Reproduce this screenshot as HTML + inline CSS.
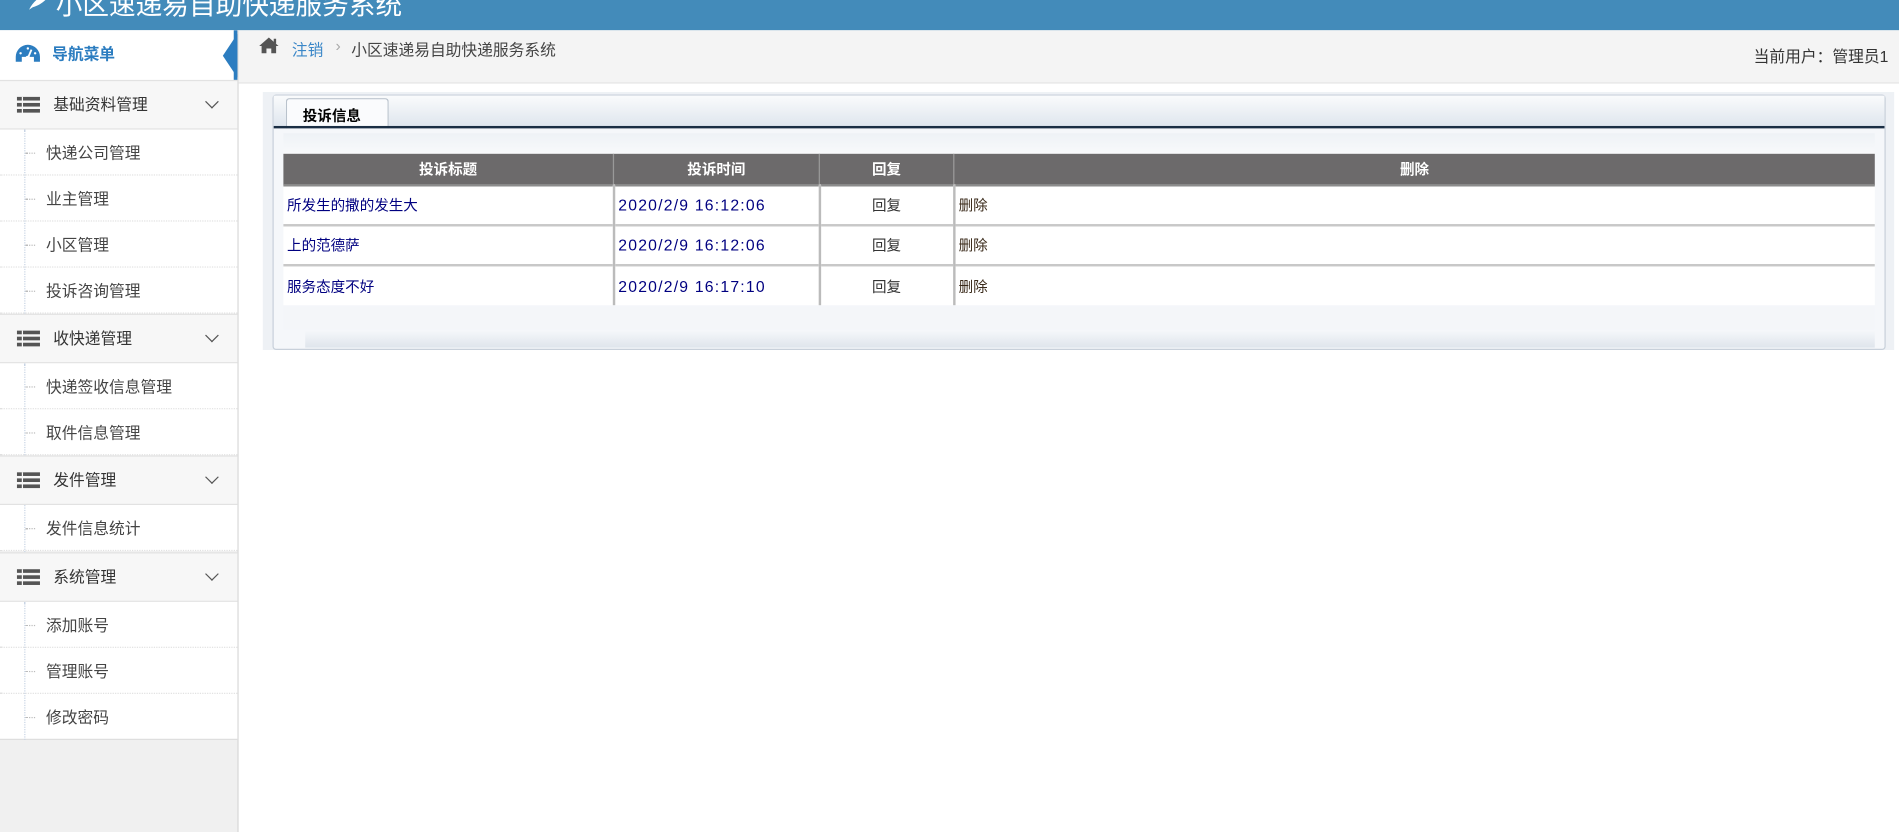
<!DOCTYPE html>
<html><head><meta charset="utf-8"><style>
html,body{margin:0;padding:0;width:1899px;height:831px;overflow:hidden;background:#fff}
#w{position:absolute;left:0;top:0;width:1568px;height:687px;transform:scale(1.21110);transform-origin:0 0;font-family:"Liberation Sans","Noto Sans CJK SC",sans-serif;font-size:13px;color:#333}
.a{position:absolute}
#hd{left:0;top:0;width:1568px;height:25px;background:#438bba;overflow:hidden}
#hd span{position:absolute;left:46px;top:-13px;font-size:22px;color:#fff;white-space:nowrap}
#sb{left:0;top:25px;width:196px;height:662px;background:#f0f0f0;border-right:1px solid #d8d8d8}
.g{position:absolute;left:0;width:196px;height:41px;background:#f7f7f7;border-bottom:1px solid #e2e2e2;border-top:1px solid #e2e2e2;box-sizing:border-box}
.g .t{position:absolute;left:44px;top:9px;color:#333}
.g .ch{position:absolute;left:171px;top:13px;width:7px;height:7px;border-right:1.5px solid #555;border-bottom:1.5px solid #555;transform:rotate(45deg)}
.ic{position:absolute;left:14px;top:13px;width:19px;height:14px}
.ic i{position:absolute;left:0;width:19px;height:3px;background:#555}
.ic b{position:absolute;left:4px;width:1px;height:14px;background:#f7f7f7;top:0}
.it{position:absolute;left:0;width:196px;height:38px;background:#fff;border-bottom:1px dotted #e0e0e0;box-sizing:border-box}
.it span{position:absolute;left:38px;top:9px;color:#444}
.it:before{content:"";position:absolute;left:21px;top:19px;width:8px;border-top:1px dotted #bbb}
.vl{position:absolute;left:20px;border-left:1px dotted #c8d4e4}
#bc{left:197px;top:25px;width:1371px;height:43px;background:#f4f4f4;border-bottom:1px solid #e5e5e5}
td,th{padding:0}
.tm{letter-spacing:1px}
</style></head><body><div id="w">
<div class="a" id="hd"><svg style="position:absolute;left:22px;top:-6px" width="22" height="16" viewBox="0 0 22 16"><path d="M2 14 C6 6 12 2 20 1 C16 6 12 10 5 12 Z" fill="#fff"/></svg><span>小区速递易自助快递服务系统</span></div>
<div class="a" id="sb">
 <div class="a" style="left:0;top:0;width:196px;height:41px;background:#fff"></div>
 <svg class="a" style="left:12px;top:11px" width="22" height="18" viewBox="0 0 22 18"><path d="M11 1 A10 10 0 0 0 1 11 L1 15 L6 15 L6 11 L16 11 L16 15 L21 15 L21 11 A10 10 0 0 0 11 1Z" fill="#2c7dc0"/><circle cx="11" cy="12" r="2" fill="#fff"/><path d="M11 12 L14 5" stroke="#fff" stroke-width="1.5"/><circle cx="5" cy="8" r="1" fill="#fff"/><circle cx="17" cy="8" r="1" fill="#fff"/><circle cx="11" cy="4" r="1" fill="#fff"/></svg>
 <div class="a" style="left:43px;top:9px;color:#2c7dc0;font-weight:bold;font-size:13px">导航菜单</div>
 <div class="a" style="left:184px;top:3px;width:0;height:0;border-top:18px solid transparent;border-bottom:18px solid transparent;border-right:12px solid #2c7dc0"></div>
 <div class="a" style="left:193px;top:0;width:3px;height:41px;background:#2c7dc0"></div>
</div>
<div class="a" style="left:0;top:25px;width:196px">
 <div class="g" style="top:41px"><div class="ic"><i style="top:0"></i><i style="top:5px"></i><i style="top:10px"></i><b></b></div><span class="t">基础资料管理</span><span class="ch"></span></div>
 <div class="it" style="top:82px"><span>快递公司管理</span></div>
 <div class="it" style="top:120px"><span>业主管理</span></div>
 <div class="it" style="top:158px"><span>小区管理</span></div>
 <div class="it" style="top:196px"><span>投诉咨询管理</span></div>
 <div class="vl" style="top:82px;height:152px"></div>
 <div class="g" style="top:234px"><div class="ic"><i style="top:0"></i><i style="top:5px"></i><i style="top:10px"></i><b></b></div><span class="t">收快递管理</span><span class="ch"></span></div>
 <div class="it" style="top:275px"><span>快递签收信息管理</span></div>
 <div class="it" style="top:313px"><span>取件信息管理</span></div>
 <div class="vl" style="top:275px;height:76px"></div>
 <div class="g" style="top:351px"><div class="ic"><i style="top:0"></i><i style="top:5px"></i><i style="top:10px"></i><b></b></div><span class="t">发件管理</span><span class="ch"></span></div>
 <div class="it" style="top:392px"><span>发件信息统计</span></div>
 <div class="vl" style="top:392px;height:39px"></div>
 <div class="g" style="top:431px"><div class="ic"><i style="top:0"></i><i style="top:5px"></i><i style="top:10px"></i><b></b></div><span class="t">系统管理</span><span class="ch"></span></div>
 <div class="it" style="top:472px"><span>添加账号</span></div>
 <div class="it" style="top:510px"><span>管理账号</span></div>
 <div class="it" style="top:548px;border-bottom:1px solid #ddd"><span>修改密码</span></div>
 <div class="vl" style="top:472px;height:114px"></div>
</div>
<div class="a" id="bc">
 <svg class="a" style="left:16px;top:5px" width="18" height="15" viewBox="0 0 18 15"><path d="M9 1 L1 8 L3 8 L3 14 L7 14 L7 10 L11 10 L11 14 L15 14 L15 8 L17 8 Z" fill="#555"/><rect x="13" y="2" width="2" height="4" fill="#555"/></svg>
 <div class="a" style="left:44px;top:6px;color:#3a87c8">注销</div>
 <div class="a" style="left:80px;top:5px;color:#aaa">›</div>
 <div class="a" style="left:93px;top:6px;color:#444">小区速递易自助快递服务系统</div>
 <div class="a" style="left:1251px;top:11px;color:#333">当前用户：管理员1</div>
</div>
<div class="a" style="left:217px;top:76px;width:1347px;height:213px;background:#eef1f5"></div>
<div class="a" style="left:225px;top:78px;width:1330px;height:209px;background:#f5f7fa;border:1px solid #c8d0da;border-radius:3px"></div>
<div class="a" style="left:226px;top:79px;width:1330px;height:25px;background:linear-gradient(#fafbfc,#dfe6ee)"></div>
<div class="a" style="left:236px;top:81px;width:83px;height:24px;background:#fafbfd;border:1px solid #b9c2cc;border-bottom:none;border-radius:3px 3px 0 0"></div>
<div class="a" style="left:250px;top:87px;font-weight:bold;font-size:12px;color:#000">投诉信息</div>
<div class="a" style="left:226px;top:104px;width:1330px;height:2px;background:#1a2e44"></div>
<div class="a" style="left:234px;top:110px;width:1314px;height:17px;background:linear-gradient(#eef2f6,#f8f9fb)"></div>
<table class="a" style="left:234px;top:127px;width:1314px;border-collapse:collapse;font-size:12px">
<tr style="height:26px;background:#6c6a6b;color:#fff;font-weight:bold;text-align:center"><th style="width:272px;border-right:1px solid #999">投诉标题</th><th style="width:169px;border-right:1px solid #999">投诉时间</th><th style="width:110px;border-right:1px solid #999">回复</th><th>删除</th></tr>
<tr style="height:33px;background:#fff;border-top:2px solid #8c8c8c"><td style="color:#000080;padding-left:3px;border-right:2px solid #bbb">所发生的撒的发生大</td><td class="tm" style="color:#000080;padding-left:3px;font-size:13px;border-right:2px solid #bbb">2020/2/9 16:12:06</td><td style="text-align:center;border-right:2px solid #bbb">回复</td><td style="padding-left:3px;color:#3a2a1a">删除</td></tr>
<tr style="height:33px;background:#fff;border-top:2px solid #c8c8c8"><td style="color:#000080;padding-left:3px;border-right:2px solid #bbb">上的范德萨</td><td class="tm" style="color:#000080;padding-left:3px;font-size:13px;border-right:2px solid #bbb">2020/2/9 16:12:06</td><td style="text-align:center;border-right:2px solid #bbb">回复</td><td style="padding-left:3px;color:#3a2a1a">删除</td></tr>
<tr style="height:33px;background:#fff;border-top:2px solid #c8c8c8"><td style="color:#000080;padding-left:3px;border-right:2px solid #bbb">服务态度不好</td><td class="tm" style="color:#000080;padding-left:3px;font-size:13px;border-right:2px solid #bbb">2020/2/9 16:17:10</td><td style="text-align:center;border-right:2px solid #bbb">回复</td><td style="padding-left:3px;color:#3a2a1a">删除</td></tr>
</table>
<div class="a" style="left:234px;top:253px;width:1314px;height:19px;background:#f4f6f9"></div>
<div class="a" style="left:252px;top:273px;width:1296px;height:14px;background:linear-gradient(#f5f7fa,#dfe5ec)"></div>
</div></body></html>
